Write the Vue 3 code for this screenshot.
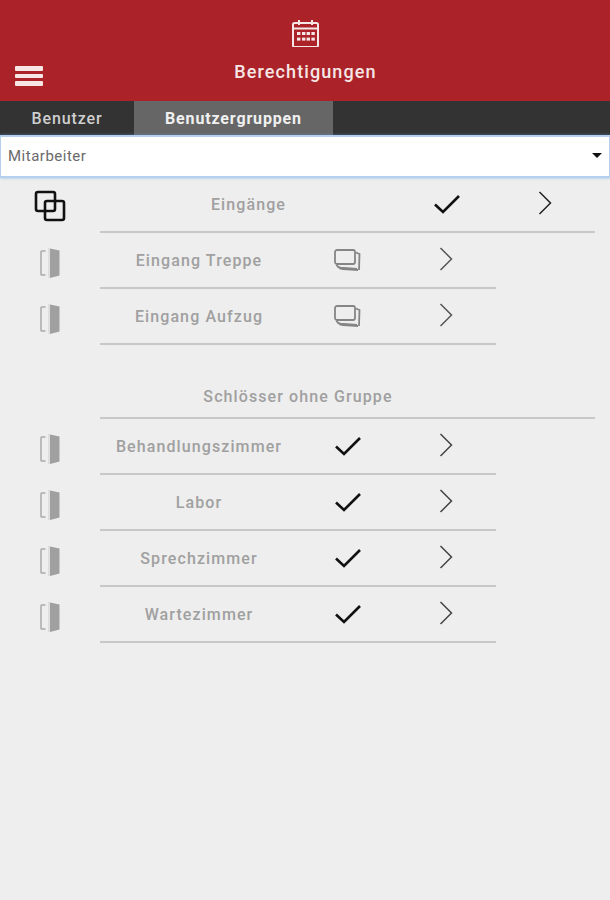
<script setup>
const groupRows = [
  { name: 'Eingang Treppe' },
  { name: 'Eingang Aufzug' },
];
const lockRows = [
  { name: 'Behandlungszimmer' },
  { name: 'Labor' },
  { name: 'Sprechzimmer' },
  { name: 'Wartezimmer' },
];
</script>

<template>
  <div class="page">
    <header class="topbar">
      <svg class="calendar" width="28" height="28" viewBox="0 0 28 28" fill="none" stroke="#f6e6e6" stroke-width="2">
        <rect x="2" y="4" width="25" height="24" rx="1.5" />
        <path d="M2 9.5h25M8 1v5M21 1v5" />
        <g fill="#f6e6e6" stroke="none">
          <rect x="6" y="13" width="3.4" height="3" /><rect x="11" y="13" width="3.4" height="3" />
          <rect x="15.6" y="13" width="3.4" height="3" /><rect x="20.4" y="13" width="3.4" height="3" />
          <rect x="6" y="18.6" width="3.4" height="3" /><rect x="11" y="18.6" width="3.4" height="3" />
          <rect x="15.6" y="18.6" width="3.4" height="3" /><rect x="20.4" y="18.6" width="3.4" height="3" />
        </g>
      </svg>
      <div class="burger"><span></span><span></span><span></span></div>
      <div class="title">Berechtigungen</div>
    </header>

    <nav class="tabs">
      <div class="tab first">Benutzer</div>
      <div class="tab active">Benutzergruppen</div>
    </nav>

    <div class="select">
      <span>Mitarbeiter</span>
      <i class="caret"></i>
    </div>

    <section class="block">
      <div class="row top">
        <div class="side">
          <svg width="32" height="32" viewBox="0 0 32 32" fill="none" stroke="#111" stroke-width="2.6">
            <rect x="2" y="2" width="19" height="19" rx="2" />
            <rect x="11" y="11" width="19" height="19" rx="2" />
          </svg>
        </div>
        <div class="cells wide">
          <div class="label">Eingänge</div>
          <div class="cell">
            <svg width="26" height="20" viewBox="0 0 26 20" fill="none" stroke="#111" stroke-width="2.6"><path d="M1 10.500 9 18 25 2" /></svg>
          </div>
          <div class="cell">
            <svg class="chev" width="14" height="24" viewBox="0 0 14 24" fill="none" stroke="#222" stroke-width="1.500"><path d="M1.500 1 12.500 12 1.500 23" /></svg>
          </div>
        </div>
      </div>

      <div v-for="row in groupRows" :key="row.name" class="row">
        <div class="side">
          <svg class="door" width="20" height="32" viewBox="0 0 20 32" fill="none">
            <path d="M5.500 4H1.800a.8.8 0 0 0-.8.8v22.400a.8.8 0 0 0 .8.8h3.700" stroke="#aaaaaa" stroke-width="1.500" />
            <path d="M9 1v30" stroke="#cfcfcf" stroke-width="1" />
            <path d="M10 1.500 19.500 3.500v25l-9.500 2.500z" fill="#a0a0a0" />
          </svg>
        </div>
        <div class="cells">
          <div class="label">{{ row.name }}</div>
          <div class="cell">
            <svg width="28" height="22" viewBox="0 0 28 22" fill="none" stroke="#858585" stroke-width="1.800">
              <rect x="1" y="1" width="20" height="14" rx="2" />
              <path d="M2.500 16c1 2 2 2.300 4 2.600l16.500 1.400M5 18.600c1 1 2 1.400 4 1.500l15 .9" />
              <path d="M22 3.500l3.500 1.500-.5 16" />
            </svg>
          </div>
          <div class="cell">
            <svg class="chev" width="14" height="24" viewBox="0 0 14 24" fill="none" stroke="#555" stroke-width="1.500"><path d="M1.500 1 12.500 12 1.500 23" /></svg>
          </div>
        </div>
      </div>
    </section>

    <section class="block lower">
      <div class="heading">Schlösser ohne Gruppe</div>
      <div v-for="row in lockRows" :key="row.name" class="row">
        <div class="side">
          <svg class="door" width="20" height="32" viewBox="0 0 20 32" fill="none">
            <path d="M5.500 4H1.800a.8.8 0 0 0-.8.8v22.400a.8.8 0 0 0 .8.8h3.700" stroke="#aaaaaa" stroke-width="1.500" />
            <path d="M9 1v30" stroke="#cfcfcf" stroke-width="1" />
            <path d="M10 1.500 19.500 3.500v25l-9.500 2.500z" fill="#a0a0a0" />
          </svg>
        </div>
        <div class="cells">
          <div class="label">{{ row.name }}</div>
          <div class="cell">
            <svg width="26" height="20" viewBox="0 0 26 20" fill="none" stroke="#111" stroke-width="2.600"><path d="M1 10.500 9 18 25 2" /></svg>
          </div>
          <div class="cell">
            <svg class="chev" width="14" height="24" viewBox="0 0 14 24" fill="none" stroke="#444" stroke-width="1.500"><path d="M1.500 1 12.500 12 1.500 23" /></svg>
          </div>
        </div>
      </div>
    </section>
  </div>
</template>

<style scoped>
.page {
  width: 610px;
  height: 900px;
  overflow: hidden;
  background: #eeeeee;
  font-family: Roboto, "Liberation Sans", sans-serif;
}

.topbar {
  position: relative;
  height: 101px;
  box-sizing: border-box;
  padding-top: 19px;
  background: #ab2328;
  text-align: center;
  color: #f6e6e6;
}

.calendar {
  display: block;
  margin: 0 auto;
}

.title {
  margin-top: 14px;
  padding-left: 1px;
  font-size: 18px;
  line-height: 22px;
  letter-spacing: 1.1px;
  font-weight: 500;
}

.burger {
  position: absolute;
  left: 15px;
  top: 66px;
  display: flex;
  flex-direction: column;
  gap: 3px;
}

.burger span {
  display: block;
  width: 28px;
  height: 5px;
  border-radius: 1px;
  background: #f6e6e6;
}

.burger span:nth-child(2) {
  height: 4px;
}

.tabs {
  display: flex;
  height: 34px;
  background: #333333;
}

.tab {
  display: flex;
  align-items: center;
  justify-content: center;
  font-size: 16px;
  font-weight: 500;
  letter-spacing: 0.9px;
  color: #cfcfcf;
}

.tab.first {
  width: 134px;
}

.tab.active {
  width: 199px;
  background: #666666;
  color: #f0f0f0;
  font-weight: 700;
  letter-spacing: 0.85px;
}

.select {
  position: relative;
  display: flex;
  align-items: center;
  justify-content: space-between;
  height: 43px;
  box-sizing: border-box;
  padding: 0 7px 2px 7px;
  background: #ffffff;
  border: 2px solid #b4d0ee;
  border-left-width: 1px;
  border-right-width: 1px;
  box-shadow: 0 0 3px rgba(90, 160, 230, 0.55);
  font-size: 15px;
  letter-spacing: 0.5px;
  color: #6a6a6a;
}

.caret {
  width: 0;
  height: 0;
  border-left: 5px solid transparent;
  border-right: 5px solid transparent;
  border-top: 5px solid #111111;
}

.block.lower {
  margin-top: 18px;
}

.row {
  display: flex;
  height: 56px;
}

.row.top {
  height: 55px;
}

.side {
  display: flex;
  align-items: center;
  justify-content: center;
  width: 100px;
  height: 56px;
  flex: none;
}

.row.top .side {
  height: 55px;
}

.door {
  margin-top: 4px;
}

.chev {
  margin: 0 2px 2px 0;
}

.cells {
  display: grid;
  grid-template-columns: 198px 99px 99px;
  width: 396px;
  box-sizing: border-box;
  border-bottom: 2px solid #c8c8c8;
}

.cells.wide {
  grid-template-columns: 297px 99px 99px;
  width: 495px;
}

.label,
.cell {
  display: flex;
  align-items: center;
  justify-content: center;
}

.cell {
  padding-bottom: 1px;
}

.label {
  font-size: 16px;
  font-weight: 500;
  letter-spacing: 1.1px;
  color: #a0a0a0;
}

.heading {
  box-sizing: border-box;
  width: 495px;
  height: 56px;
  margin-left: 100px;
  padding: 24px 99px 0 0;
  border-bottom: 2px solid #c8c8c8;
  text-align: center;
  font-size: 16px;
  font-weight: 500;
  letter-spacing: 1.1px;
  color: #a0a0a0;
}
</style>
